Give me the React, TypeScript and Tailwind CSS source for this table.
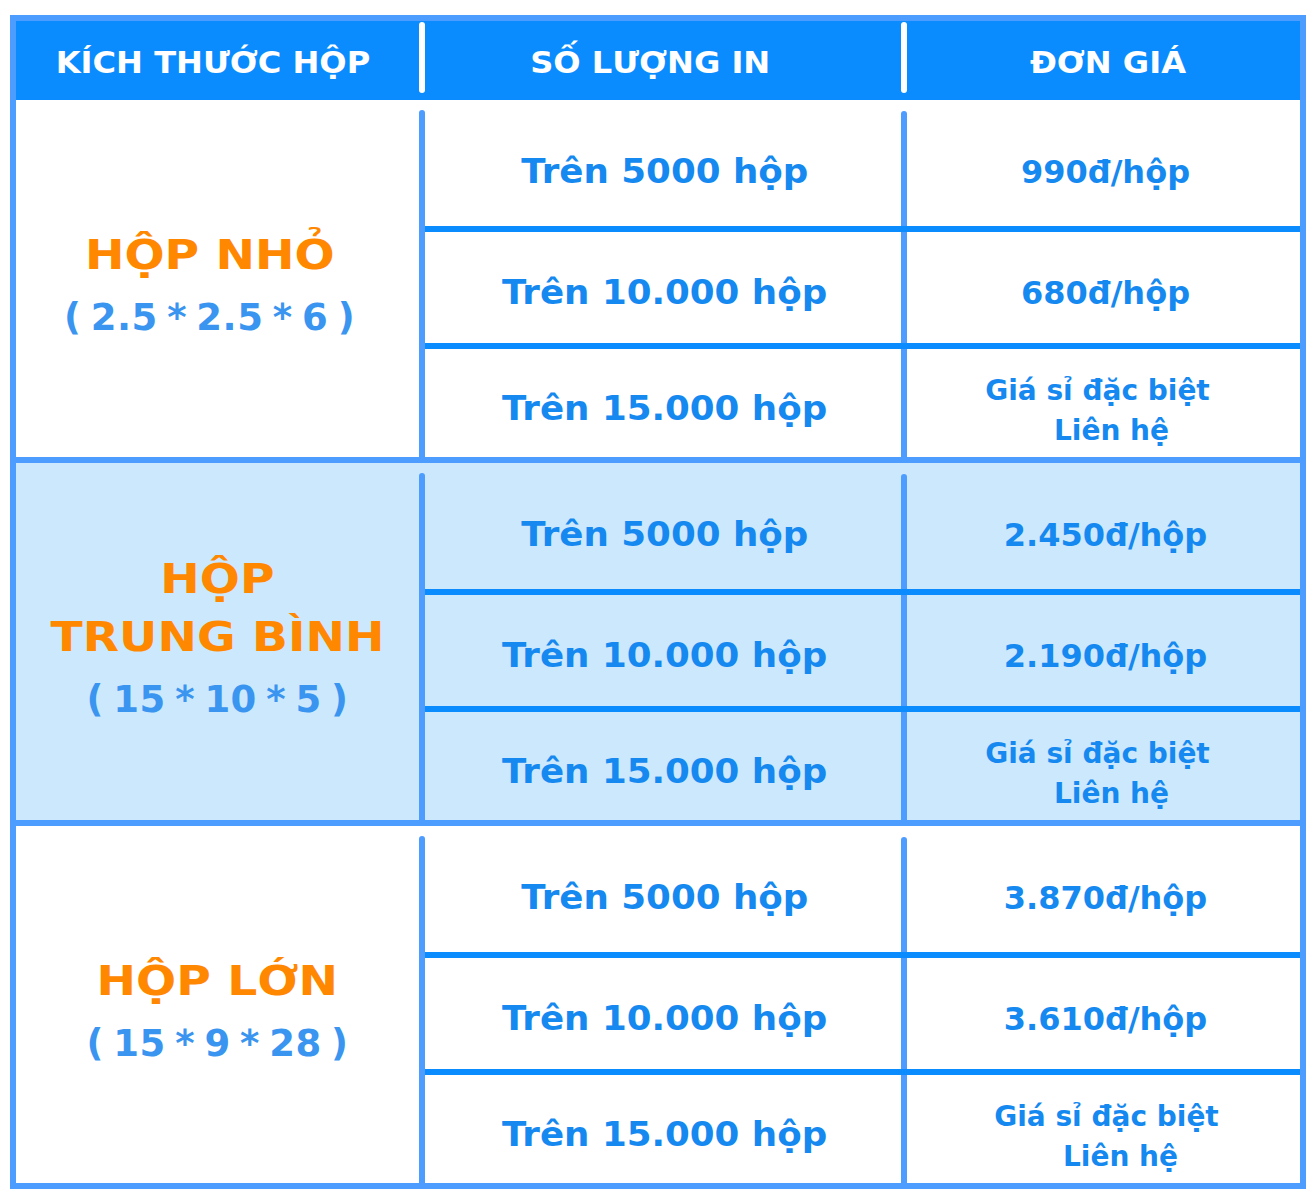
import React from "react";

type Group = {
  title: string[];
  dims: string;
  bg: string;
  pad: string;
  priceShift: boolean;
  prices: string[];
};

const groups: Group[] = [
  { title: ["HỘP NHỎ"], dims: "( 2.5 * 2.5 * 6 )", bg: "bg-white", pad: "pt-[16px] pr-[16px]", priceShift: true, prices: ["990đ/hộp", "680đ/hộp"] },
  { title: ["HỘP", "TRUNG BÌNH"], dims: "( 15 * 10 * 5 )", bg: "bg-[#cce8fc]", pad: "pb-[4px]", priceShift: true, prices: ["2.450đ/hộp", "2.190đ/hộp"] },
  { title: ["HỘP LỚN"], dims: "( 15 * 9 * 28 )", bg: "bg-white", pad: "pt-[16px]", priceShift: false, prices: ["3.870đ/hộp", "3.610đ/hộp"] },
];

const qty = ["Trên 5000 hộp", "Trên 10.000 hộp", "Trên 15.000 hộp"];

function QtyText({ children }: { children: React.ReactNode }) {
  return (
    <span className="inline-block whitespace-nowrap text-[33px] leading-[40px] font-bold text-[#1589f0] scale-x-[1.08]">
      {children}
    </span>
  );
}

function PriceText({ children }: { children: React.ReactNode }) {
  return (
    <span className="inline-block whitespace-nowrap text-[32px] leading-[40px] font-bold text-[#1589f0]">
      {children}
    </span>
  );
}

function SubRow({
  height,
  pad,
  first,
  left,
  right,
}: {
  height: string;
  pad: string;
  first: boolean;
  left: React.ReactNode;
  right: React.ReactNode;
}) {
  return (
    <div className={`flex ${height}`}>
      <div className={`w-[476px] flex items-center justify-center pl-[4px] ${pad}`}>{left}</div>
      <div className="w-[6px] flex flex-col">
        <div
          className={
            first
              ? "mt-[11px] flex-1 rounded-t-full bg-[#4d9cff]"
              : "flex-1 bg-[#4d9cff]"
          }
        />
      </div>
      <div className={`flex-1 flex items-center justify-center pl-[4px] ${pad}`}>{right}</div>
    </div>
  );
}

function GroupRow({ g }: { g: Group }) {
  return (
    <div className={`flex h-[357px] ${g.bg}`}>
      <div className={`w-[403px] flex flex-col items-center justify-center ${g.pad}`}>
        {g.title.map((t) => (
          <div
            key={t}
            className="inline-block whitespace-nowrap text-[40px] leading-[58px] font-bold text-[#ff8800] scale-x-[1.18]"
          >
            {t}
          </div>
        ))}
        <div className="inline-block whitespace-nowrap text-[37px] leading-[60px] mt-[4px] font-bold text-[#3a95f0] tracking-[0.5px] [word-spacing:-4px]">
          {g.dims}
        </div>
      </div>
      <div className="w-[6px] flex flex-col">
        <div className="mt-[10px] flex-1 rounded-t-full bg-[#4d9cff]" />
      </div>
      <div className="flex-1 flex flex-col">
        <SubRow
          height="h-[126px]"
          pad="pt-[18px]"
          first
          left={<QtyText>{qty[0]}</QtyText>}
          right={<PriceText>{g.prices[0]}</PriceText>}
        />
        <div className="h-[6px] bg-[#0a8cff]" />
        <SubRow
          height="h-[111px]"
          pad="pt-[10px]"
          first={false}
          left={<QtyText>{qty[1]}</QtyText>}
          right={<PriceText>{g.prices[1]}</PriceText>}
        />
        <div className="h-[6px] bg-[#0a8cff]" />
        <SubRow
          height="flex-1"
          pad="pt-[12px]"
          first={false}
          left={<QtyText>{qty[2]}</QtyText>}
          right={
            <div className={`flex flex-col items-center pt-[4px] ${g.priceShift ? "mr-[16px]" : "ml-[2px]"}`}>
              <span className="whitespace-nowrap text-[28px] leading-[40px] font-bold text-[#1589f0]">
                Giá sỉ đặc biệt
              </span>
              <span className="whitespace-nowrap text-[28px] leading-[40px] font-bold text-[#1589f0] pl-[28px]">
                Liên hệ
              </span>
            </div>
          }
        />
      </div>
    </div>
  );
}

export default function App() {
  return (
    <div className="w-[1315px] h-[1200px] bg-white font-['DejaVu_Sans',sans-serif] pt-[15px] pl-[10px]">
      <div className="w-[1296px] border-[6px] border-[#4d9cff] flex flex-col">
        <div className="flex h-[79px] bg-[#0a8cff]">
          <div className="w-[403px] flex items-center justify-center pt-[4px] pr-[10px]">
            <span className="inline-block whitespace-nowrap text-[30px] font-bold text-white scale-x-[1.07]">
              KÍCH THƯỚC HỘP
            </span>
          </div>
          <div className="w-[6px] mt-[1px] h-[71px] rounded-full bg-white" />
          <div className="w-[476px] flex items-center justify-center pt-[4px] pr-[26px]">
            <span className="inline-block whitespace-nowrap text-[30px] font-bold text-white scale-x-[1.07]">
              SỐ LƯỢNG IN
            </span>
          </div>
          <div className="w-[6px] mt-[1px] h-[71px] rounded-full bg-white" />
          <div className="flex-1 flex items-center justify-center pt-[4px] pl-[8px]">
            <span className="inline-block whitespace-nowrap text-[30px] font-bold text-white scale-x-[1.07]">
              ĐƠN GIÁ
            </span>
          </div>
        </div>
        <GroupRow g={groups[0]} />
        <div className="h-[6px] bg-[#4d9cff]" />
        <GroupRow g={groups[1]} />
        <div className="h-[6px] bg-[#4d9cff]" />
        <GroupRow g={groups[2]} />
      </div>
    </div>
  );
}
